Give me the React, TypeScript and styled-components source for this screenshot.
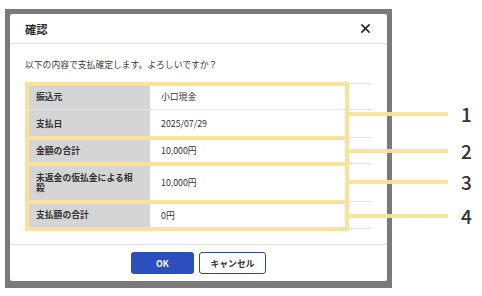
import React from "react";
import styled, { createGlobalStyle } from "styled-components";

const Global = createGlobalStyle`
  html, body { margin: 0; padding: 0; background: #ffffff; }
  body { font-family: "Noto Sans CJK JP", "Noto Sans", sans-serif; color: #333; }
  * { box-sizing: border-box; }
`;

const Page = styled.div`
  position: relative;
  width: 482px;
  height: 296px;
  overflow: hidden;
  padding: 9px 0 0 5px;
`;

const Frame = styled.div`
  width: 387px;
  height: 279px;
  background: #7a7a7a;
  padding: 5px 5px 7px 5px;
`;

const Dialog = styled.div`
  width: 377px;
  height: 267px;
  background: #fff;
  border-radius: 2px;
  display: flex;
  flex-direction: column;
`;

const Header = styled.div`
  height: 30px;
  flex: none;
  display: flex;
  align-items: center;
  justify-content: space-between;
  padding: 0 17px 0 15px;
  border-bottom: 1px solid #e2e2e2;
`;

const Title = styled.div`
  font-size: 11.3px;
  font-weight: 700;
  color: #2b2b2b;
`;

const Close = styled.button`
  border: none;
  background: none;
  padding: 0;
  width: 10px;
  height: 10px;
  display: flex;
  align-items: center;
  justify-content: center;
  cursor: pointer;
`;

const Body = styled.div`
  flex: 1;
  padding: 15px 15px 0 15px;
  display: flex;
  flex-direction: column;
`;

const Message = styled.div`
  font-size: 8.8px;
  line-height: 12px;
  color: #3a3a3a;
  margin-bottom: 12px;
`;

const Table = styled.div`
  width: 347px;
  border-top: 1px solid #e4e4e4;
`;

const Group = styled.div`
  position: relative;
`;

const Highlight = styled.div`
  position: absolute;
  left: 0;
  top: -2px;
  bottom: -2px;
  width: 324px;
  border: 4px solid #f8e39a;
  pointer-events: none;
  z-index: 2;
`;

const Row = styled.div<{ $h: number }>`
  display: grid;
  grid-template-columns: 125px 1fr;
  height: ${(p) => p.$h}px;
  border-bottom: 1px solid #e4e4e4;
`;

const Label = styled.div`
  background: #d5d5d5;
  font-size: 8.8px;
  line-height: 10px;
  font-weight: 700;
  color: #333;
  display: flex;
  align-items: center;
  padding: 0 16px 0 11px;
`;

const Value = styled.div`
  font-size: 8.8px;
  color: #333;
  display: flex;
  align-items: center;
  padding-left: 11px;
`;

const Footer = styled.div`
  height: 37px;
  flex: none;
  border-top: 1px solid #e2e2e2;
  display: flex;
  align-items: center;
  justify-content: center;
  gap: 5px;
`;

const Button = styled.button<{ $primary?: boolean }>`
  height: 22px;
  width: ${(p) => (p.$primary ? 63 : 67)}px;
  border-radius: 3px;
  font-family: "Noto Sans CJK JP", "Noto Sans", sans-serif;
  font-size: 8.8px;
  font-weight: 700;
  padding: 0;
  cursor: pointer;
  background: ${(p) => (p.$primary ? "#2c4fbf" : "#ffffff")};
  color: ${(p) => (p.$primary ? "#ffffff" : "#333333")};
  border: ${(p) => (p.$primary ? "none" : "1.5px solid #37478c")};
`;

const Callout = styled.div<{ $y: number }>`
  position: absolute;
  left: 349px;
  top: ${(p) => p.$y - 2}px;
  width: 99px;
  height: 4px;
  background: #f8e39a;
  opacity: 0.95;
  z-index: 3;
`;

const Num = styled.div<{ $y: number }>`
  position: absolute;
  left: 461px;
  top: ${(p) => p.$y - 14}px;
  height: 28px;
  line-height: 28px;
  font-family: "Noto Sans CJK JP", "Noto Sans", sans-serif;
  font-size: 19px;
  font-weight: 500;
  color: #333;
`;

type R = { label: string; value: string; h: number };

const groups: R[][] = [
  [
    { label: "振込元", value: "小口現金", h: 26 },
    { label: "支払日", value: "2025/07/29", h: 28 },
  ],
  [{ label: "金額の合計", value: "10,000円", h: 26 }],
  [{ label: "未返金の仮払金による相殺", value: "10,000円", h: 38 }],
  [{ label: "支払額の合計", value: "0円", h: 27 }],
];

const callouts = [
  { n: "1", y: 114 },
  { n: "2", y: 151 },
  { n: "3", y: 182 },
  { n: "4", y: 216 },
];

export default function App() {
  return (
    <>
      <Global />
      <Page>
        <Frame>
          <Dialog>
            <Header>
              <Title>確認</Title>
              <Close aria-label="close">
                <svg width="9" height="9" viewBox="0 0 9 9">
                  <path d="M1 1 L8 8 M8 1 L1 8" stroke="#222" strokeWidth="1.7" strokeLinecap="square" />
                </svg>
              </Close>
            </Header>
            <Body>
              <Message>以下の内容で支払確定します。よろしいですか？</Message>
              <Table>
                {groups.map((g, gi) => (
                  <Group key={gi}>
                    {g.map((r) => (
                      <Row key={r.label} $h={r.h}>
                        <Label>{r.label}</Label>
                        <Value>{r.value}</Value>
                      </Row>
                    ))}
                    <Highlight />
                  </Group>
                ))}
              </Table>
            </Body>
            <Footer>
              <Button $primary>OK</Button>
              <Button>キャンセル</Button>
            </Footer>
          </Dialog>
        </Frame>
        {callouts.map((c) => (
          <React.Fragment key={c.n}>
            <Callout $y={c.y} />
            <Num $y={c.y}>{c.n}</Num>
          </React.Fragment>
        ))}
      </Page>
    </>
  );
}
